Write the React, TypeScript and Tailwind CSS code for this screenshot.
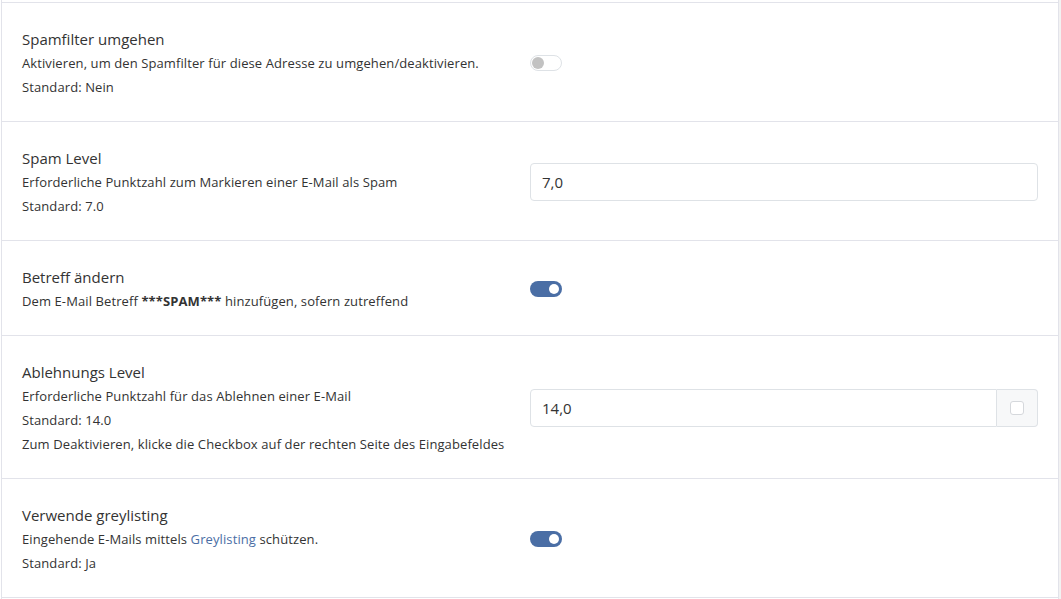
import React from "react";

function Toggle({ on }: { on: boolean }) {
  return on ? (
    <div className="relative h-4 w-8 rounded-full bg-[#4a6ea5]">
      <div className="absolute right-[3px] top-[3px] h-[10px] w-[10px] rounded-full bg-white" />
    </div>
  ) : (
    <div className="relative h-4 w-8 rounded-full border border-[#dee2e6] bg-white">
      <div className="absolute left-px top-px h-3 w-3 rounded-full bg-[#c2c2c2]" />
    </div>
  );
}

function Row({
  title,
  lines,
  control,
}: {
  title: string;
  lines: React.ReactNode[];
  control: React.ReactNode;
}) {
  return (
    <div className="grid grid-cols-2 items-center border-b border-[#e2e3ea] px-5 pt-6 pb-[22px]">
      <div>
        <div className="text-[15px] leading-6 text-[#333]">{title}</div>
        {lines.map((l, i) => (
          <div key={i} className="text-[13px] leading-6 tracking-[0.1px] text-[#333]">
            {l}
          </div>
        ))}
      </div>
      <div>{control}</div>
    </div>
  );
}

function TextInput({ value }: { value: string }) {
  return (
    <div className="flex h-[38px] w-full items-center rounded border border-[#dee2e6] bg-white px-[11px] text-[15px] text-[#333]">
      {value}
    </div>
  );
}

export default function App() {
  return (
    <div className="flex min-h-screen bg-white font-['Open_Sans',sans-serif]">
      <div className="w-px" />
      <div className="w-[1058px] border-x border-[#e2e3ea] bg-white pt-[2px]">
        <div className="border-t border-[#e2e3ea]" />
        <Row
          title="Spamfilter umgehen"
          lines={[
            "Aktivieren, um den Spamfilter für diese Adresse zu umgehen/deaktivieren.",
            "Standard: Nein",
          ]}
          control={<Toggle on={false} />}
        />
        <Row
          title="Spam Level"
          lines={["Erforderliche Punktzahl zum Markieren einer E-Mail als Spam", "Standard: 7.0"]}
          control={<TextInput value="7,0" />}
        />
        <Row
          title="Betreff ändern"
          lines={[
            <span>
              Dem E-Mail Betreff <b className="font-bold">***SPAM***</b> hinzufügen, sofern zutreffend
            </span>,
          ]}
          control={<Toggle on={true} />}
        />
        <Row
          title="Ablehnungs Level"
          lines={[
            "Erforderliche Punktzahl für das Ablehnen einer E-Mail",
            "Standard: 14.0",
            "Zum Deaktivieren, klicke die Checkbox auf der rechten Seite des Eingabefeldes",
          ]}
          control={
            <div className="flex h-[38px] w-full">
              <div className="flex flex-1 items-center rounded-l border border-[#dee2e6] bg-white px-[11px] text-[15px] text-[#333]">
                14,0
              </div>
              <div className="flex w-[41px] items-center justify-center rounded-r border border-l-0 border-[#dee2e6] bg-[#f7f8f9]">
                <div className="h-[14px] w-[14px] rounded-[3px] border border-[#d5d8dc] bg-white" />
              </div>
            </div>
          }
        />
        <Row
          title="Verwende greylisting"
          lines={[
            <span>
              Eingehende E-Mails mittels <span className="text-[#4a6ea5]">Greylisting</span> schützen.
            </span>,
            "Standard: Ja",
          ]}
          control={<Toggle on={true} />}
        />
      </div>
      <div className="flex-1 bg-[#f2f2f2]" />
    </div>
  );
}
